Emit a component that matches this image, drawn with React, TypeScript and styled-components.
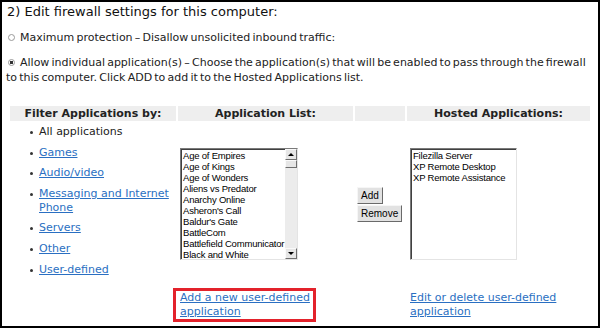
import styled, { createGlobalStyle } from "styled-components";

const GlobalStyle = createGlobalStyle`
body {
  margin: 0;
  background: #fff;
}
`

const Frame = styled.div`
width: 600px;
height: 328px;
box-sizing: border-box;
border: 2px solid #000;
background: #fff;
font-family: "DejaVu Sans", Verdana, sans-serif;
font-size: 11px;
color: #222;
overflow: hidden;
`

const Title = styled.h2`
margin: 0;
padding: 2px 0 0 5px;
font-size: 13px;
font-weight: normal;
line-height: 16px;
color: #111;
`

const OptionLine = styled.p`
margin: 10px 0 0 0;
padding: 0 4px 0 4px;
line-height: 15px;
word-spacing: -1.3px;
`

const Radio = styled.span<{ $checked?: boolean }>`
display: inline-block;
box-sizing: border-box;
width: 7px;
height: 7px;
margin: 0 5px 0 2px;
border: 1px solid #9a9a9a;
border-radius: 50%;
background: ${(p) => (p.$checked ? "radial-gradient(circle, #333 0 1.6px, #fff 2px)" : "#fff")};
`

const TableGrid = styled.div`
display: grid;
grid-template-columns: 166px 175px 50px 183px;
column-gap: 2px;
margin-left: 8px;
`

const HeaderRow = styled(TableGrid)`
margin-top: 21px;
`

const HeaderCell = styled.div`
height: 15px;
line-height: 15px;
background: #eeeeee;
text-align: center;
font-weight: bold;
font-size: 11px;
color: #222;
`

const BodyRow = styled(TableGrid)`
margin-top: 4px;
align-items: start;
`

const FilterList = styled.ul`
list-style: none;
margin: 0;
padding: 0 0 0 20px;
`

const FilterItem = styled.li`
display: flex;
align-items: flex-start;
line-height: 14px;
margin-bottom: 6.6px;
`

const Bullet = styled.span`
flex: none;
width: 3px;
height: 3px;
margin: 6px 6px 0 0;
border-radius: 50%;
background: #333;
`

const Link = styled.a`
color: #2a6fc2;
text-decoration: underline;
cursor: pointer;
`

const Cell = styled.div<{ $top: number; $left: number }>`
padding-top: ${(p) => p.$top}px;
padding-left: ${(p) => p.$left}px;
`

const ListBox = styled.div<{ $width: number }>`
display: flex;
width: ${(p) => p.$width}px;
height: 112px;
box-sizing: border-box;
border: 1px solid;
border-color: #7a7a7a #e4e4e4 #e4e4e4 #7a7a7a;
box-shadow: inset 1px 1px 0 #404040;
background: #fff;
overflow: hidden;
`

const Options = styled.div`
flex: 1;
padding: 1px 0 0 2px;
font-family: "Liberation Sans", Arial, sans-serif;
font-size: 9.5px;
letter-spacing: -0.2px;
line-height: 11px;
color: #000;
white-space: nowrap;
`

const ScrollTrack = styled.div`
flex: none;
width: 12px;
display: flex;
flex-direction: column;
background: #ececec;
`

const ScrollKnob = styled.div<{ $h: number }>`
height: ${(p) => p.$h}px;
box-sizing: border-box;
display: flex;
align-items: center;
justify-content: center;
background: #e6e6e6;
border: 1px solid;
border-color: #fafafa #6e6e6e #6e6e6e #fafafa;
`

const Spacer = styled.div`
flex: 1;
`

const Arrow = styled.span<{ $down?: boolean }>`
width: 0;
height: 0;
border-left: 3px solid transparent;
border-right: 3px solid transparent;
${(p) => (p.$down ? "border-top: 3px solid #000;" : "border-bottom: 3px solid #000;")}
`

const ButtonStack = styled.div`
display: flex;
flex-direction: column;
align-items: flex-start;
gap: 1px;
`

const Button = styled.button`
font-family: "Liberation Sans", Arial, sans-serif;
font-size: 10px;
color: #000;
background: #e2e2e2;
border: 1px solid;
border-color: #f6f6f6 #6a6a6a #6a6a6a #f6f6f6;
padding: 0 3px;
margin: 0;
height: 17px;
line-height: 14px;
`

const FooterRow = styled(TableGrid)`
margin-top: 5px;
`

const Highlight = styled.div`
box-sizing: border-box;
width: 143px;
margin-left: -5px;
border: 3px solid #e3222b;
padding: 0 2px 0 4px;
line-height: 14px;
`

const PlainLink = styled.div`
padding: 3px 0 0 3px;
line-height: 14px;
`

const appList = [
  "Age of Empires",
  "Age of Kings",
  "Age of Wonders",
  "Aliens vs Predator",
  "Anarchy Online",
  "Asheron's Call",
  "Baldur's Gate",
  "BattleCom",
  "Battlefield Communicator",
  "Black and White",
];

const hosted = ["Filezilla Server", "XP Remote Desktop", "XP Remote Assistance"];

const filters = ["Games", "Audio/video", "Messaging and Internet Phone", "Servers", "Other", "User-defined"];

export default function App() {
  return (<>
    <GlobalStyle />
    <Frame>
      <Title>2) Edit firewall settings for this computer:</Title>
      <OptionLine><Radio />Maximum protection – Disallow unsolicited inbound traffic:</OptionLine>
      <OptionLine><Radio $checked />Allow individual application(s) – Choose the application(s) that will be enabled to pass through the firewall to this computer. Click ADD to add it to the Hosted Applications list.</OptionLine>

      <HeaderRow>
        <HeaderCell>Filter Applications by:</HeaderCell>
        <HeaderCell>Application List:</HeaderCell>
        <HeaderCell />
        <HeaderCell>Hosted Applications:</HeaderCell>
      </HeaderRow>

      <BodyRow>
        <FilterList>
          <FilterItem><Bullet /><span>All applications</span></FilterItem>
          {filters.map((f) => (
            <FilterItem key={f}><Bullet /><Link>{f}</Link></FilterItem>
          ))}
        </FilterList>
        <Cell $top={23} $left={2}>
          <ListBox $width={118}>
            <Options>
              {appList.map((a) => <div key={a}>{a}</div>)}
            </Options>
            <ScrollTrack>
              <ScrollKnob $h={11}><Arrow /></ScrollKnob>
              <ScrollKnob $h={8} />
              <Spacer />
              <ScrollKnob $h={11}><Arrow $down /></ScrollKnob>
            </ScrollTrack>
          </ListBox>
        </Cell>
        <Cell $top={62} $left={2}>
          <ButtonStack>
            <Button>Add</Button>
            <Button>Remove</Button>
          </ButtonStack>
        </Cell>
        <Cell $top={23} $left={3}>
          <ListBox $width={107}>
            <Options>
              {hosted.map((a) => <div key={a}>{a}</div>)}
            </Options>
          </ListBox>
        </Cell>
      </BodyRow>

      <FooterRow>
        <div />
        <Highlight><Link>Add a new user-defined application</Link></Highlight>
        <div />
        <PlainLink><Link>Edit or delete user-defined application</Link></PlainLink>
      </FooterRow>
    </Frame>
  </>)
}
